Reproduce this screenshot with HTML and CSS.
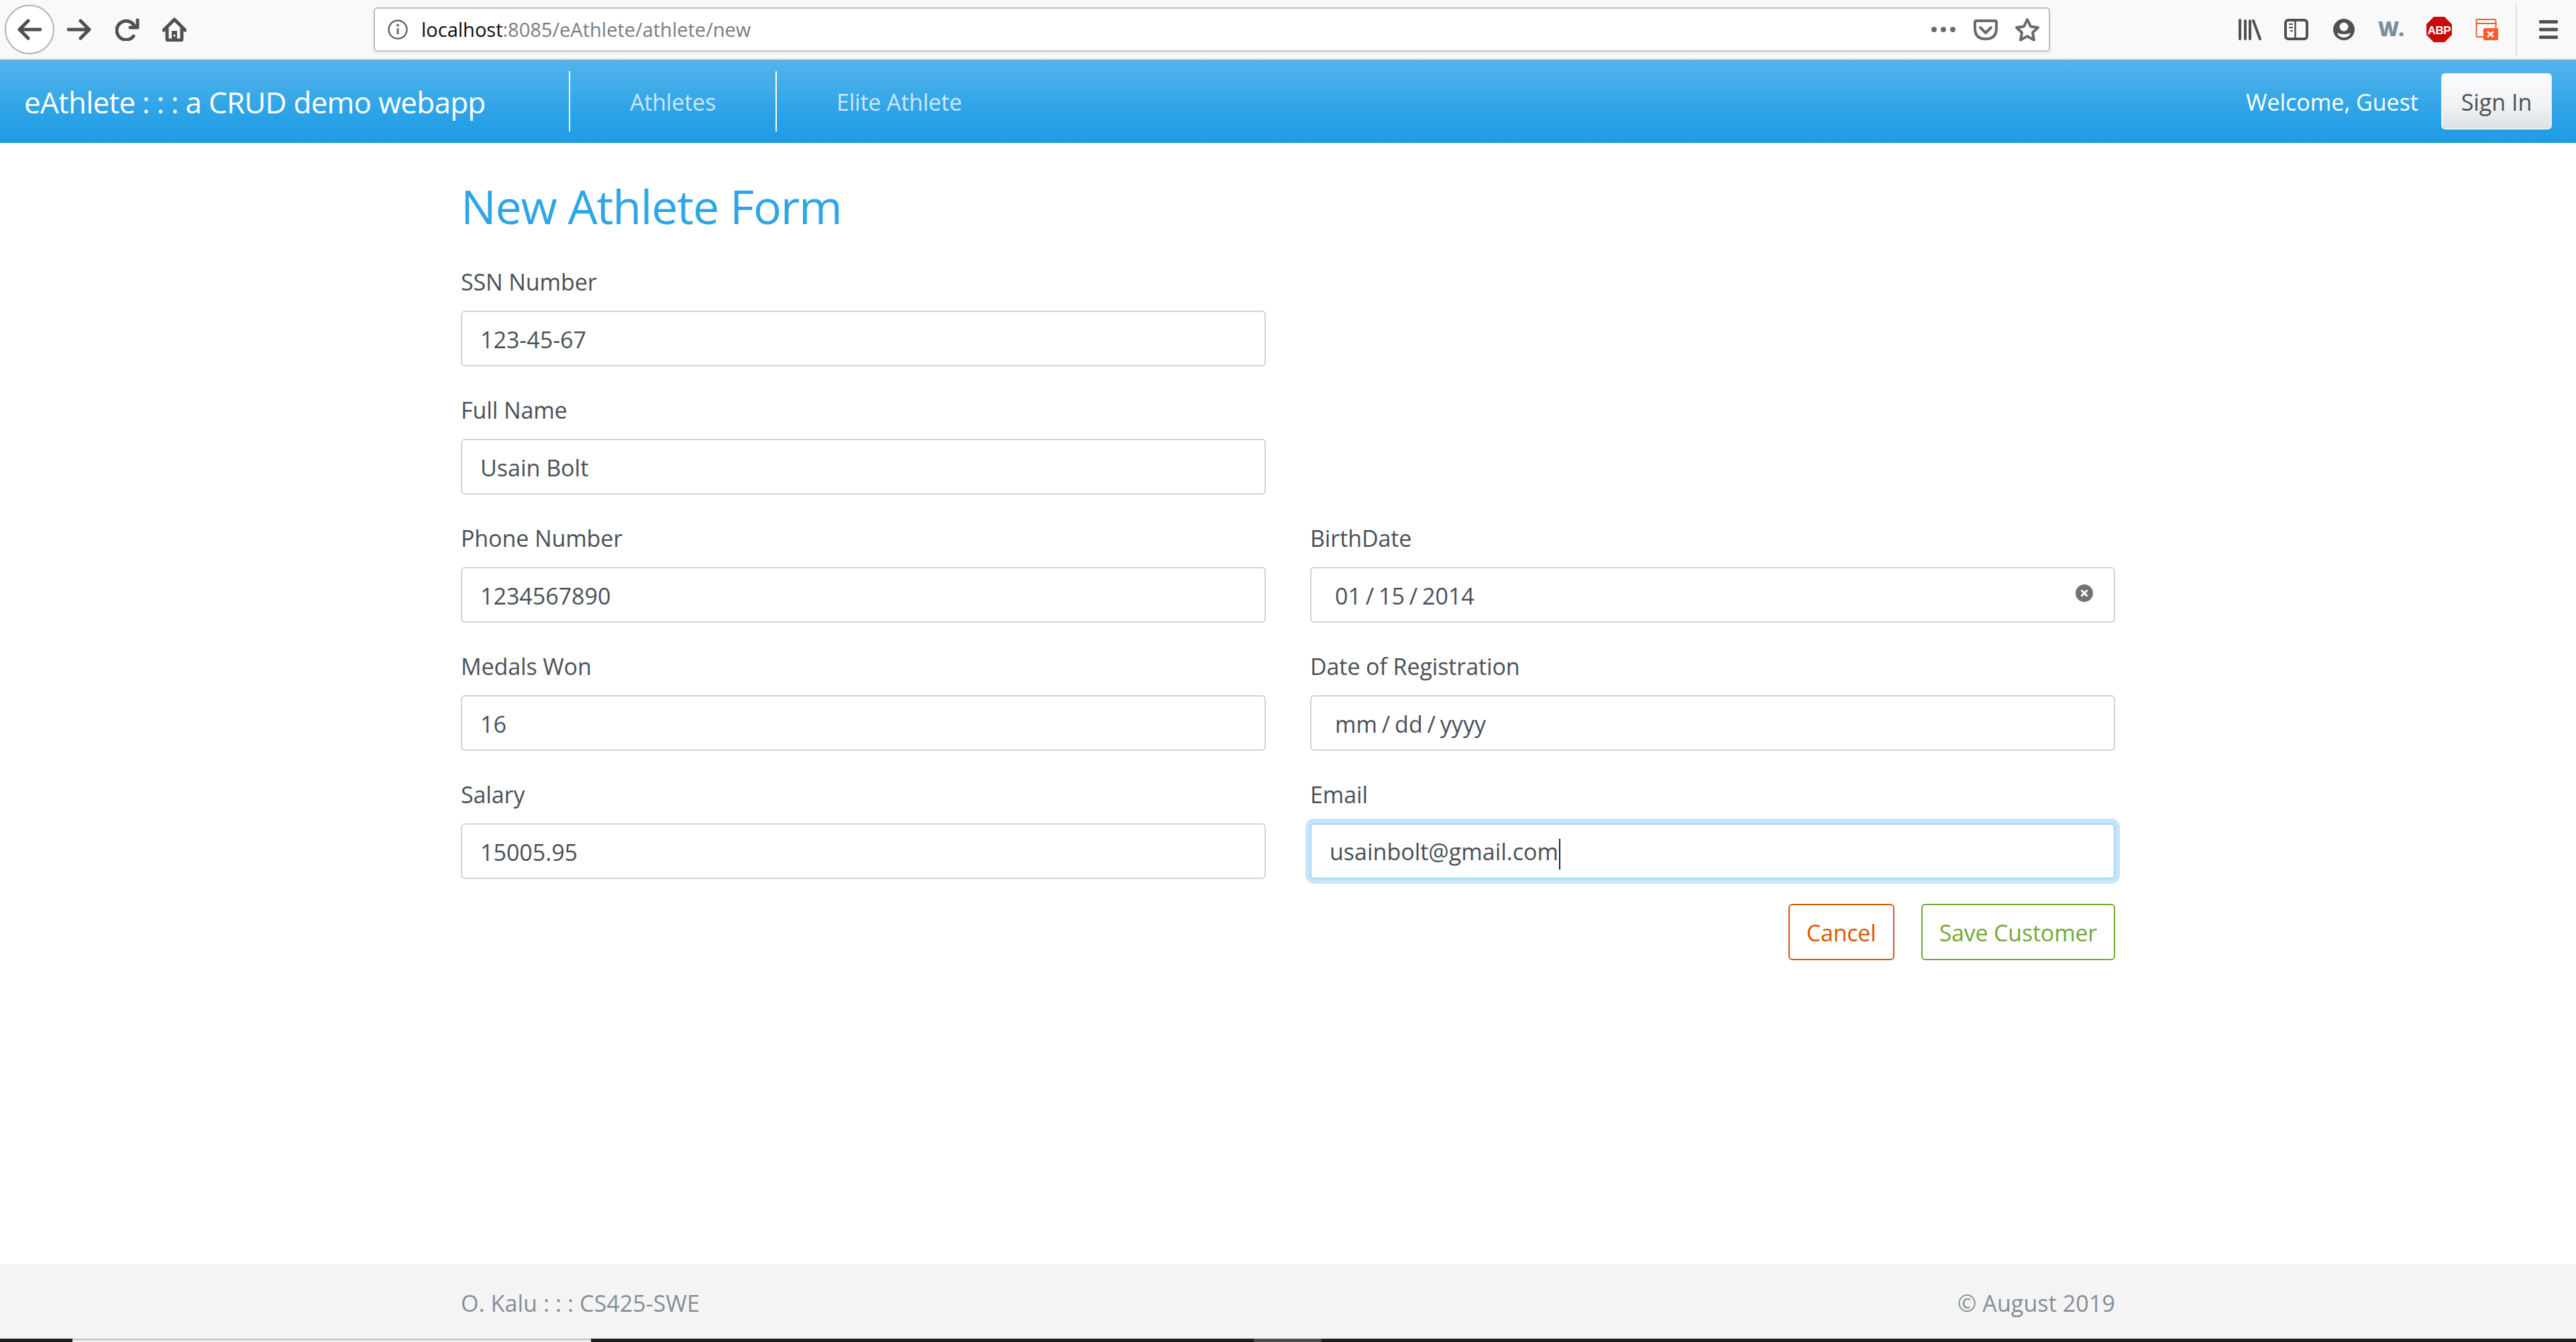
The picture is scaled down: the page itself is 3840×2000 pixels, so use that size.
FILE: index.html
```html
<!DOCTYPE html>
<html lang="en">
<head>
<meta charset="utf-8">
<title>eAthlete</title>
<link rel="stylesheet" href="styles.css">
</head>
<body>
<header class="browser">
  <div class="back"><svg width="36" height="32" viewBox="0 0 36 32"><path class="ic" d="M34 16H3M16 3 3 16l13 13"/></svg></div>
  <svg class="forward" width="36" height="32" viewBox="0 0 36 32"><path class="ic" d="M2 16h31M20 3l13 13-13 13"/></svg>
  <svg class="reload" width="36" height="34" viewBox="0 0 36 34"><path class="ic" d="M28 11A14 14 0 1 0 27 27M33 3v11H22"/></svg>
  <svg class="home" width="36" height="36" viewBox="0 0 36 36"><path class="ic" d="M2 19 18 3l16 16M7 17v15q0 2 2 2h18q2 0 2-2V17"/><path class="fill" d="M14 20h8v14h-8z"/><circle cx="18" cy="27" r="1.6" fill="#f9f9fa"/></svg>
  <div class="urlbar">
    <svg class="info" width="32" height="32" viewBox="0 0 32 32"><circle cx="16" cy="16" r="13.5" fill="none" stroke="#6a6a6a" stroke-width="2.5"/><path d="M16 14v9" stroke="#6a6a6a" stroke-width="3"/><circle cx="16" cy="9.5" r="2" fill="#6a6a6a"/></svg>
    <div class="url"><span class="host">localhost</span>:8085/eAthlete/athlete/new</div>
    <svg class="dots" width="36" height="10" viewBox="0 0 36 10"><circle cx="4" cy="5" r="4"/><circle cx="18" cy="5" r="4"/><circle cx="32" cy="5" r="4"/></svg>
    <svg class="pocket" width="36" height="32" viewBox="0 0 36 32"><path d="M4 3h28q2 0 2 2v9q0 16-16 16T2 14V5q0-2 2-2z" fill="none" stroke="#6a6a6a" stroke-width="4"/><path d="M10 13l8 8 8-8" fill="none" stroke="#6a6a6a" stroke-width="4" stroke-linecap="round" stroke-linejoin="round"/></svg>
    <svg class="star" width="36" height="36" viewBox="0 0 36 36"><path d="M18 3l5 10.500 11 1.500-8 7.500 2 11-10-5.500-10 5.500 2-11-8-7.500 11-1.500z" fill="none" stroke="#6a6a6a" stroke-width="4" stroke-linejoin="round"/></svg>
  </div>
  <svg class="library" width="34" height="32" viewBox="0 0 34 32"><path class="ic ic4" d="M2 2v28M10 3v27M17 3v27M22 3l10 27"/></svg>
  <svg class="sidebar" width="36" height="32" viewBox="0 0 36 32"><rect x="2" y="2" width="32" height="28" rx="4" fill="none" stroke="#505051" stroke-width="4"/><path d="M16.500 2v28" stroke="#505051" stroke-width="2.500"/><path d="M7 8h6M7 13h6M9 18h4" stroke="#505051" stroke-width="2"/></svg>
  <svg class="account" width="32" height="32" viewBox="0 0 32 32"><circle cx="16" cy="16" r="16" fill="#505051"/><circle cx="16" cy="12" r="6.500" fill="#f9f9fa"/><path d="M6 21q10 4 20 0-2 7-10 7T6 21z" fill="#f9f9fa"/></svg>
  <div class="wlogo">W.</div>
  <svg class="abp" width="38" height="38" viewBox="0 0 38 38"><path d="M11 0h16l11 11v16L27 38H11L0 27V11z" fill="#c70d0c"/><text x="19" y="25.500" text-anchor="middle" class="abp-text">ABP</text></svg>
  <svg class="popup" width="34" height="32" viewBox="0 0 34 32"><path d="M12 27H3q-1.500 0-1.500-1.500v-23Q1.500 1 3 1h26q1.500 0 1.500 1.500V14" fill="none" stroke="#ff5a28" stroke-width="2"/><path d="M2 7h28" stroke="#ff5a28" stroke-width="2"/><rect x="12" y="14" width="22" height="18" rx="2" fill="#ff5a28"/><path d="M18 19l9 8M27 19l-9 8" stroke="#fff" stroke-width="2.500"/></svg>
  <div class="tb-sep"></div>
  <svg class="menu" width="28" height="28" viewBox="0 0 28 28"><path class="ic" d="M2 2.500h24M2 14h24M2 25.500h24"/></svg>
</header>

<nav class="navbar">
  <a class="brand">eAthlete : : : a CRUD demo webapp</a>
  <a class="nav-link first">Athletes</a>
  <a class="nav-link">Elite Athlete</a>
  <span class="welcome">Welcome, Guest</span>
  <button class="signin">Sign In</button>
</nav>

<main class="main">
  <h1 class="title">New Athlete Form</h1>
  <form class="form-grid">
    <div class="group"><label class="lbl">SSN Number</label><input class="control" value="123-45-67"></div>
    <div class="group"></div>
    <div class="group"><label class="lbl">Full Name</label><input class="control" value="Usain Bolt"></div>
    <div class="group"></div>
    <div class="group"><label class="lbl">Phone Number</label><input class="control" value="1234567890"></div>
    <div class="group">
      <label class="lbl">BirthDate</label>
      <div class="date-wrap">
        <input class="control date" value="01 / 15 / 2014">
        <svg class="clear" width="26" height="26" viewBox="0 0 26 26"><circle cx="13" cy="13" r="13" fill="#737373"/><path d="M8.500 8.500l9 9M17.500 8.500l-9 9" stroke="#fff" stroke-width="3"/></svg>
      </div>
    </div>
    <div class="group"><label class="lbl">Medals Won</label><input class="control" value="16"></div>
    <div class="group"><label class="lbl">Date of Registration</label><input class="control date" value="mm / dd / yyyy"></div>
    <div class="group"><label class="lbl">Salary</label><input class="control" value="15005.95"></div>
    <div class="group"><label class="lbl">Email</label><div class="control focused">usainbolt@gmail.com<span class="caret"></span></div></div>
  </form>
  <div class="actions">
    <button class="btn btn-cancel" type="button">Cancel</button>
    <button class="btn btn-save" type="button">Save Customer</button>
  </div>
</main>

<footer class="footer">
  <div class="footer-inner"><span>O. Kalu : : : CS425-SWE</span><span>© August 2019</span></div>
</footer>
<div class="taskbar"><div class="task-a"></div><div class="task-b"></div></div>
</body>
</html>
```

FILE: styles.css
```css
* { box-sizing: border-box; }
html, body { margin: 0; height: 100%; }
body {
  display: flex;
  flex-direction: column;
  height: 2000px;
  overflow: hidden;
  background: #fff;
  color: #495057;
  font-family: "Open Sans", "Noto Sans", sans-serif;
  font-size: 34px;
}

.browser {
  flex: none;
  height: 89px;
  display: flex;
  align-items: center;
  background: #f9f9fa;
  border-bottom: 2px solid #e1e1e2;
  padding-left: 7px;
}
.ic { fill: none; stroke: #505051; stroke-width: 5; stroke-linecap: round; stroke-linejoin: round; }
.ic4 { stroke-width: 4; }
.fill { fill: #505051; }
.back {
  width: 74px; height: 74px;
  border-radius: 50%;
  border: 2px solid #b1b1b1;
  background: #fff;
  display: flex; align-items: center; justify-content: center;
}
.forward { margin-left: 19px; }
.reload { margin-left: 36px; }
.home { margin-left: 34px; }
.urlbar {
  margin-left: 279px;
  width: 2499px;
  height: 66px;
  background: #fff;
  border: 2px solid #bebebe;
  border-radius: 5px;
  box-shadow: 0 2px 6px rgba(0,0,0,.08);
  display: flex;
  align-items: center;
  padding-left: 18px;
}
.info { flex: none; }
.url {
  flex: 1;
  margin-left: 19px;
  font-size: 29px;
  color: #7c7c7d;
  white-space: nowrap;
}
.host { color: #0c0c0d; }
.dots { fill: #6a6a6a; flex: none; }
.pocket { margin-left: 27px; flex: none; }
.star { margin-left: 26px; margin-right: 14px; flex: none; }
.library { margin-left: 281px; }
.sidebar { margin-left: 34px; }
.account { margin-left: 37px; }
.wlogo {
  margin-left: 35px;
  width: 36px;
  font: 800 30px "Open Sans", sans-serif;
  color: #7a8f9c;
  letter-spacing: -1px;
  position: relative;
  top: -1px;
}
.abp { margin-left: 36px; }
.abp-text { font: 700 17px "Liberation Sans", sans-serif; fill: #fff; letter-spacing: -0.5px; }
.popup { margin-left: 35px; }
.tb-sep { margin-left: 26px; width: 2px; height: 78px; background: #e0e0e1; }
.menu { margin-left: 33px; }

.navbar {
  flex: none;
  height: 124px;
  display: flex;
  align-items: center;
  padding: 0 36px;
  background: linear-gradient(#54b4eb, #2fa4e7 60%, #1d9ce5);
  color: #fff;
}
.brand {
  font-size: 44px;
  letter-spacing: -0.75px;
  color: #fff;
  width: 812px;
  padding-top: 2px;
  white-space: nowrap;
}
.nav-link {
  height: 90px;
  padding: 2px 89px 0;
  display: flex;
  align-items: center;
  border-left: 2px solid #fff;
  color: rgba(255,255,255,.75);
  letter-spacing: -0.2px;
  white-space: nowrap;
}
.welcome { margin-left: auto; padding-top: 2px; white-space: nowrap; }
.signin {
  margin-left: 34px;
  width: 165px;
  height: 84px;
  padding: 2px 0 0;
  border: 2px solid #eef1f3;
  border-radius: 6px;
  background: linear-gradient(#fdfdfe, #f0f1f3 60%, #dde1e5);
  color: #495057;
  font: inherit;
}

.main {
  flex: 1;
  width: 2466px;
  margin: 0 auto;
  padding-top: 52px;
}
.title {
  margin: 0 0 42px;
  font-size: 70px;
  line-height: 84px;
  font-weight: 400;
  letter-spacing: -1.25px;
  color: #2fa4e7;
}
.form-grid {
  display: grid;
  grid-template-columns: 1200px 1200px;
  column-gap: 66px;
}
.group { margin-bottom: 36px; }
.lbl {
  display: block;
  height: 54px;
  line-height: 54px;
  padding-top: 2px;
  margin-bottom: 18px;
  letter-spacing: -0.1px;
}
.control {
  display: block;
  width: 100%;
  height: 83px;
  padding: 2px 27px 0;
  border: 2px solid #ced4da;
  border-radius: 6px;
  background: #fff;
  color: #495057;
  font: inherit;
  line-height: 77px;
  outline: none;
}
.date { padding-left: 35px; word-spacing: -2px; }
.date-wrap { position: relative; }
.clear { position: absolute; right: 33px; top: 26px; }
.focused {
  border-color: #a1d6f4;
  box-shadow: 0 0 0 7px #c5e5f8;
  white-space: nowrap;
}
.caret {
  display: inline-block;
  width: 2px;
  height: 46px;
  margin-left: 1px;
  background: #222;
  vertical-align: middle;
}
.actions {
  display: flex;
  justify-content: flex-end;
  gap: 40px;
  margin-top: 1px;
}
.btn {
  height: 84px;
  padding: 2px 25px 0;
  background: #fff;
  border-radius: 6px;
  font: inherit;
  letter-spacing: -0.2px;
}
.btn-cancel { border: 2px solid #dd5600; color: #dd5600; }
.btn-save { border: 2px solid #73a839; color: #73a839; }

.footer {
  flex: none;
  height: 111px;
  background: #f4f4f4;
  color: #868e96;
}
.footer-inner {
  width: 2466px;
  height: 100%;
  margin: 0 auto;
  padding-top: 5px;
  letter-spacing: 0.1px;
  display: flex;
  align-items: center;
  justify-content: space-between;
}
.taskbar {
  flex: none;
  height: 5px;
  background: #1d1d1d;
  display: flex;
}
.task-a { margin-left: 108px; width: 773px; background: #eee; border-top: 2px solid #bdbdbd; }
.task-b { margin-left: 988px; width: 101px; background: #4a4a4a; }
```
